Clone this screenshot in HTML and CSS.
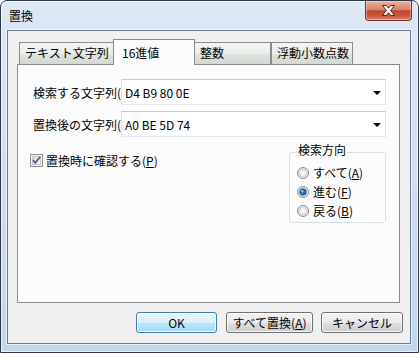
FILE: index.html
```html
<!DOCTYPE html>
<html lang="ja">
<head>
    <meta charset="UTF-8">
    <meta name="viewport" content="width=device-width, initial-scale=1.0">
    <title>置換</title>
    <link rel="stylesheet" href="styles.css">
</head>
<body>

    <div class="window">
        <div class="titlebar">
            <span class="title">置換</span>
            <div class="close-btn">
                <svg width="15" height="11" viewBox="0 0 15 11">
                    <path d="M1.5 0.5 H5.2 L7.5 3.2 L9.8 0.5 H13.5 L9.6 5.5 L13.5 10.5 H9.8 L7.5 7.8 L5.2 10.5 H1.5 L5.4 5.5 Z" fill="#ffffff" stroke="#5a2418" stroke-width="1"/>
                </svg>
            </div>
        </div>

        <div class="client">
            <!-- tab strip -->
            <div class="tabs">
                <div class="tab tab-text">テキスト文字列</div>
                <div class="tab tab-hex active">16進値</div>
                <div class="tab tab-int">整数</div>
                <div class="tab tab-float">浮動小数点数</div>
            </div>

            <div class="panel">
                <div class="field">
                    <span class="field-label">検索する文字列(</span>
                    <div class="combo">
                        <span class="combo-value">D4 B9 80 0E</span>
                        <span class="combo-arrow"></span>
                    </div>
                </div>
                <div class="field">
                    <span class="field-label">置換後の文字列(</span>
                    <div class="combo">
                        <span class="combo-value">A0 BE 5D 74</span>
                        <span class="combo-arrow"></span>
                    </div>
                </div>

                <div class="options">
                    <label class="check">
                        <svg class="box" width="13" height="13" viewBox="0 0 13 13">
                            <defs>
                                <linearGradient id="boxFill" x1="0" y1="0" x2="1" y2="1">
                                    <stop offset="0" stop-color="#d8d8d8"/>
                                    <stop offset="1" stop-color="#fbfbfb"/>
                                </linearGradient>
                            </defs>
                            <rect x="0.5" y="0.5" width="12" height="12" fill="#f4f4f4" stroke="#8e8f8f"/>
                            <rect x="2.5" y="2.5" width="8" height="8" fill="url(#boxFill)" stroke="#c4c4c4"/>
                            <path d="M3 6.2 L5.3 8.8 L10.2 2.8" fill="none" stroke="#4d6185" stroke-width="1.8"/>
                        </svg>
                        <span>置換時に確認する(<u>P</u>)</span>
                    </label>

                    <div class="group">
                        <div class="group-title">検索方向</div>
                        <label class="radio">
                            <svg width="12" height="12" viewBox="0 0 12 12">
                                <circle cx="6" cy="6" r="5.5" fill="#e4e4e4" stroke="#8e8f8f"/>
                                <circle cx="6" cy="6" r="3.5" fill="#f6f6f6" stroke="#d0d0d0"/>
                            </svg>
                            <span>すべて(<u>A</u>)</span>
                        </label>
                        <label class="radio">
                            <svg width="12" height="12" viewBox="0 0 12 12">
                                <circle cx="6" cy="6" r="5.5" fill="#e4e4e4" stroke="#8e8f8f"/>
                                <circle cx="6" cy="6" r="3.3" fill="#1f6fb8" stroke="#2a4f7c" stroke-width="0.8"/>
                                <circle cx="5.2" cy="5.2" r="1.3" fill="#7fc4f0"/>
                            </svg>
                            <span>進む(<u>F</u>)</span>
                        </label>
                        <label class="radio">
                            <svg width="12" height="12" viewBox="0 0 12 12">
                                <circle cx="6" cy="6" r="5.5" fill="#e4e4e4" stroke="#8e8f8f"/>
                                <circle cx="6" cy="6" r="3.5" fill="#f6f6f6" stroke="#d0d0d0"/>
                            </svg>
                            <span>戻る(<u>B</u>)</span>
                        </label>
                    </div>
                </div>
            </div>

            <div class="buttons">
                <button class="btn btn-default btn-ok">OK</button>
                <button class="btn btn-all">すべて置換(<u>A</u>)</button>
                <button class="btn btn-cancel">キャンセル</button>
            </div>
        </div>
    </div>

</body>
</html>
```

FILE: styles.css
```css
body {
    margin: 0;
    background-color: #ffffff;
    font-family: "Noto Sans CJK JP", "Noto Sans", sans-serif;
    font-size: 12px;
    color: #000;
}

u {
    text-decoration: underline;
    text-underline-offset: 1px;
}

.window {
    width: 419px;
    height: 353px;
    box-sizing: border-box;
    border: 1px solid #2d3745;
    border-radius: 7px 7px 0 0;
    background: linear-gradient(to bottom, #dde8f5 0%, #cddcef 60%, #c4d6ec 100%);
    box-shadow: inset 0 0 0 1px rgba(255, 255, 255, 0.7);
    padding: 0 7px 0 6px;
    display: flex;
    flex-direction: column;
}

.titlebar {
    height: 29px;
    display: flex;
    align-items: flex-start;
}

.title {
    margin-top: 8px;
    margin-left: 2px;
    line-height: 14px;
}

.close-btn {
    margin-left: auto;
    margin-right: -1px;
    width: 47px;
    height: 20px;
    box-sizing: border-box;
    border: 1px solid #7a3527;
    border-top: none;
    border-radius: 0 0 4px 4px;
    background: linear-gradient(to bottom, #eab0a2 0%, #d98470 45%, #c5452c 52%, #c95a40 80%, #dc8a70 100%);
    box-shadow: inset 0 0 0 1px rgba(255, 255, 255, 0.35);
    display: flex;
    align-items: center;
    justify-content: center;
}

.client {
    height: 314px;
    box-sizing: border-box;
    border: 1px solid #6b7a90;
    box-shadow: 0 0 0 1px rgba(255, 255, 255, 0.6);
    background-color: #f0f0f0;
    padding-top: 8px;
    display: flex;
    flex-direction: column;
}

/* tabs */
.tabs {
    display: flex;
    align-items: flex-end;
    height: 25px;
    padding-left: 11px;
}

.tab {
    box-sizing: border-box;
    height: 22px;
    border: 1px solid #898c95;
    border-bottom: none;
    padding-left: 5px;
    line-height: 20px;
    white-space: nowrap;
    background: linear-gradient(to bottom, #f4f4f4 0%, #ececec 50%, #dfe4de 52%, #d4d8d2 100%);
}

.tab-text {
    width: 95px;
}

.tab-hex {
    width: 82px;
    margin-left: -1px;
}

.tab-int {
    width: 77px;
    margin-left: -1px;
}

.tab-float {
    width: 82px;
}

.tab.active {
    position: relative;
    z-index: 1;
    height: 26px;
    margin-bottom: -1px;
    padding-left: 8px;
    line-height: 25px;
    background: #fcfcfc;
}

.panel {
    width: 383px;
    height: 239px;
    margin-left: 9px;
    box-sizing: border-box;
    border: 1px solid #898c95;
    background-color: #fcfcfc;
    padding: 14px 13px 0 15px;
}

.field {
    display: flex;
    align-items: center;
    height: 26px;
}

.field + .field {
    margin-top: 6px;
}

.field-label {
    width: 88px;
    flex: none;
    white-space: nowrap;
}

.combo {
    flex: 1;
    height: 26px;
    box-sizing: border-box;
    border: 1px solid;
    border-color: #c5c9cf #dfe3e8 #e3e9ef #dfe3e8;
    background-color: #ffffff;
    display: flex;
    align-items: center;
    justify-content: space-between;
    padding-left: 3px;
}

.combo-arrow {
    width: 0;
    height: 0;
    border-left: 4px solid transparent;
    border-right: 4px solid transparent;
    border-top: 4px solid #000;
    margin-right: 4px;
    margin-top: 1px;
}

/* checkbox + direction group */
.options {
    display: flex;
    justify-content: space-between;
    margin-top: 6px;
}

.check {
    display: flex;
    align-items: center;
    gap: 3px;
    height: 16px;
    margin-top: 9px;
    margin-left: -3px;
}

.group {
    width: 97px;
    height: 71px;
    box-sizing: border-box;
    margin-top: 9px;
    border: 1px solid #d5dfe5;
    border-radius: 3px;
    padding: 0 0 1px 7px;
}

.group-title {
    width: fit-content;
    margin-top: -10px;
    margin-bottom: 6px;
    padding: 0 1px;
    line-height: 14px;
    background-color: #fcfcfc;
}

.radio {
    display: flex;
    align-items: center;
    gap: 4px;
    height: 19px;
}

/* buttons */
.buttons {
    display: flex;
    justify-content: flex-end;
    margin-top: 9px;
    padding-right: 7px;
}

.btn {
    height: 21px;
    box-sizing: border-box;
    border: 1px solid #707070;
    border-radius: 3px;
    background: linear-gradient(to bottom, #f2f2f2 0%, #ebebeb 50%, #dddddd 51%, #cfcfcf 100%);
    box-shadow: inset 0 0 0 1px rgba(255, 255, 255, 0.8);
    font-family: inherit;
    font-size: 12px;
    color: #000;
    padding: 0;
    line-height: 18px;
}

.btn-default {
    border-color: #3c7fb1;
    background: linear-gradient(to bottom, #eaf6fd 0%, #d9f0fc 50%, #bee6fd 51%, #a7d9f5 100%);
}

.btn-ok {
    width: 81px;
}

.btn-all {
    width: 87px;
    margin-left: 9px;
}

.btn-cancel {
    width: 82px;
    margin-left: 8px;
}
```
